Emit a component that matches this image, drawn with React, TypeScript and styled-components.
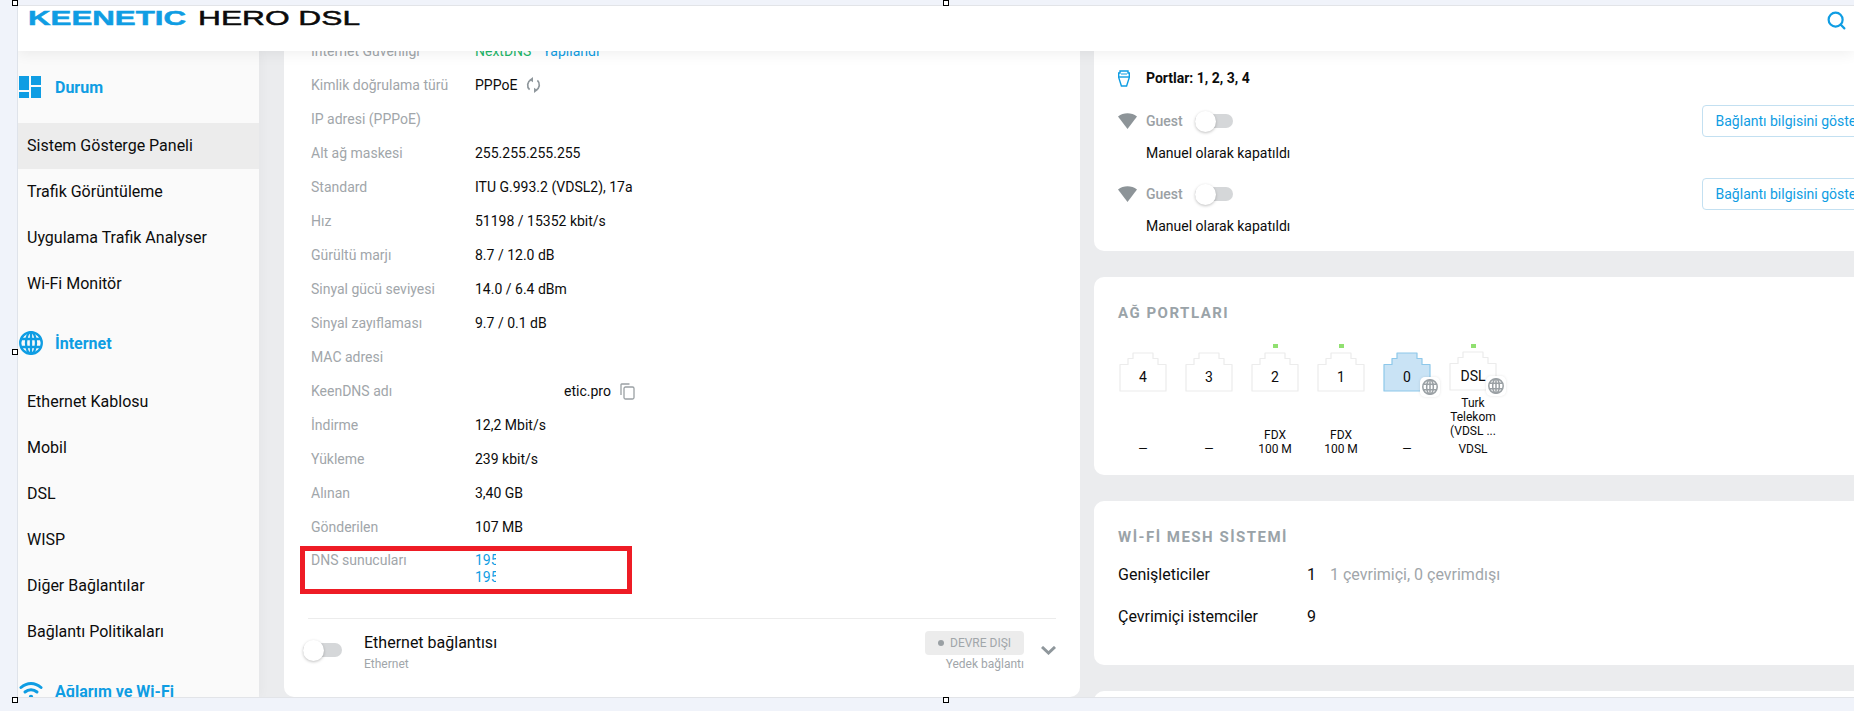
import React from 'react';
import styled, {createGlobalStyle} from "styled-components";
import {Search} from "lucide-react";

const BLUE = '#0f9de3'
const GRAY = '#a1a6aa'

const GlobalStyle = createGlobalStyle`
    html, body {
        margin: 0;
        height: 100%;
        overflow: hidden;
        background: #f0f3fa;
        font-family: Roboto, "Noto Sans", sans-serif;
        color: #0c0c0c;
    }
`

const menu = [
    {icon: 'status', title: 'Durum', items: ['Sistem Gösterge Paneli', 'Trafik Görüntüleme', 'Uygulama Trafik Analyser', 'Wi-Fi Monitör']},
    {icon: 'globe', title: 'İnternet', items: ['Ethernet Kablosu', 'Mobil', 'DSL', 'WISP', 'Diğer Bağlantılar', 'Bağlantı Politikaları']},
    {icon: 'wifi', title: 'Ağlarım ve Wi-Fi', items: []},
]

const details = [
    {label: 'Kimlik doğrulama türü', value: 'PPPoE', extra: 'sync'},
    {label: 'IP adresi (PPPoE)', value: ''},
    {label: 'Alt ağ maskesi', value: '255.255.255.255'},
    {label: 'Standard', value: 'ITU G.993.2 (VDSL2), 17a'},
    {label: 'Hız', value: '51198 / 15352 kbit/s'},
    {label: 'Gürültü marjı', value: '8.7 / 12.0 dB'},
    {label: 'Sinyal gücü seviyesi', value: '14.0 / 6.4 dBm'},
    {label: 'Sinyal zayıflaması', value: '9.7 / 0.1 dB'},
    {label: 'MAC adresi', value: ''},
    {label: 'KeenDNS adı', value: 'etic.pro', extra: 'copy'},
    {label: 'İndirme', value: '12,2 Mbit/s'},
    {label: 'Yükleme', value: '239 kbit/s'},
    {label: 'Alınan', value: '3,40 GB'},
    {label: 'Gönderilen', value: '107 MB'},
]

const ports = [
    {name: '4', speed: ['—']},
    {name: '3', speed: ['—']},
    {name: '2', led: true, speed: ['FDX', '100 M']},
    {name: '1', led: true, speed: ['FDX', '100 M']},
    {name: '0', active: true, globe: true, speed: ['—']},
    {name: 'DSL', led: true, globe: true, raised: true, speed: ['Turk', 'Telekom', '(VDSL ...'], mode: 'VDSL'},
]

const GlobeIcon = ({size = 24, color = BLUE}: {size?: number, color?: string}) => (
    <svg width={size} height={size} viewBox="0 0 24 24" fill="none" stroke={color} strokeWidth="2.3">
        <circle cx="12" cy="12" r="10.8"/>
        <ellipse cx="12" cy="12" rx="5" ry="10.8"/>
        <path d="M12 1V23M2.4 8H21.6M2.4 16H21.6"/>
    </svg>
)

const MenuIcon = ({type}: {type: string}) => {
    if (type === 'status') {
        return (
            <svg width="22" height="22" viewBox="0 0 22 22" fill={BLUE}>
                <rect x="0" y="0" width="10" height="14"/>
                <rect x="12" y="0" width="10" height="9"/>
                <rect x="0" y="16" width="10" height="6"/>
                <rect x="12" y="11" width="10" height="11"/>
            </svg>
        )
    }
    if (type === 'globe') return <GlobeIcon/>
    return (
        <svg width="24" height="22" viewBox="0 0 24 22" fill="none" stroke={BLUE} strokeWidth="3" strokeLinecap="round">
            <path d="M2 7.5C8 2 16 2 22 7.5"/>
            <path d="M6 12C9.5 9 14.5 9 18 12"/>
            <circle cx="12" cy="17" r="2.2" fill={BLUE} stroke="none"/>
        </svg>
    )
}

const SyncIcon = () => (
    <svg width="15" height="16" viewBox="0 0 15 16" fill="none" stroke="#8f979c" strokeWidth="1.7">
        <path d="M5 2.8A6 6 0 0 0 3.6 12.6"/>
        <path d="M10 13.2A6 6 0 0 0 11.4 3.4"/>
        <path d="M7 0V5.2L3.4 2.8Z" fill="#8f979c" stroke="none"/>
        <path d="M8 16V10.8L11.6 13.2Z" fill="#8f979c" stroke="none"/>
    </svg>
)

const CopyIcon = () => (
    <svg width="15" height="17" viewBox="0 0 15 17" fill="none" stroke="#9aa0a4" strokeWidth="1.3">
        <path d="M1 12V1.6C1 1.2 1.2 1 1.6 1H9.5"/>
        <rect x="4" y="4" width="10" height="12" rx="1.5"/>
    </svg>
)

const CableIcon = () => (
    <svg width="12" height="17" viewBox="0 0 12 17" fill="none" stroke={BLUE} strokeWidth="1.4">
        <path d="M2 1H10V3H11.3V7.5L8.6 16H3.4L0.7 7.5V3H2Z"/>
        <path d="M0.7 7H11.3"/>
        <path d="M4 3V5M6 3V5M8 3V5" strokeWidth="1"/>
    </svg>
)

const GuestIcon = () => (
    <svg width="19" height="16" viewBox="0 0 19 16" fill="#8d9498">
        <path d="M0 3.6C5.5 -0.8 13.5 -0.8 19 3.6L9.5 16Z"/>
    </svg>
)

const PortShape = ({active}: {active?: boolean}) => (
    <svg width="48" height="40" viewBox="0 0 48 40"
         fill={active ? '#c9e3f5' : '#fff'} stroke={active ? '#8ec8ea' : '#ececec'} strokeWidth="1.2">
        <path d="M1 12.5H9V6.5H14V1H34V6.5H39V12.5H47V39H1Z" strokeLinejoin="round"/>
    </svg>
)

const Toggle = () => (
    <ToggleTrack>
        <ToggleKnob/>
    </ToggleTrack>
)

const GuestNetwork = () => (
    <GuestBlock>
        <GuestRow>
            <IconCell><GuestIcon/></IconCell>
            <GuestName>Guest</GuestName>
            <Toggle/>
            <OutlineButton>Bağlantı bilgisini göster</OutlineButton>
        </GuestRow>
        <GuestNote>Manuel olarak kapatıldı</GuestNote>
    </GuestBlock>
)

export default function App() {
    return (
        <>
            <GlobalStyle/>
            <Frame>
                <Header>
                    <svg width="345" height="24" viewBox="0 0 345 24">
                        <text x="0" y="18.5" fontFamily="Liberation Sans" fontWeight="700" fontSize="21"
                              fill={BLUE} stroke={BLUE} strokeWidth="0.5" textLength="158" lengthAdjust="spacingAndGlyphs">KEENETIC</text>
                        <text x="170" y="18.5" fontFamily="Liberation Sans" fontSize="21"
                              fill="#0b0b0b" stroke="#0b0b0b" strokeWidth="0.5" textLength="162" lengthAdjust="spacingAndGlyphs">HERO DSL</text>
                    </svg>
                    <SearchButton><Search size={21} color={BLUE} strokeWidth={2.5}/></SearchButton>
                </Header>
                <Main>
                    <Sidebar>
                        {menu.map(group => (
                            <div key={group.title}>
                                <GroupHead>
                                    <GroupIcon><MenuIcon type={group.icon}/></GroupIcon>
                                    {group.title}
                                </GroupHead>
                                {group.items.map((item, i) => (
                                    <MenuItem key={item} $active={group.icon === 'status' && i === 0}>{item}</MenuItem>
                                ))}
                            </div>
                        ))}
                    </Sidebar>
                    <Content>
                        <LeftCard>
                            <DetailRow>
                                <DetailLabel>İnternet Güvenliği</DetailLabel>
                                <DetailValue>
                                    <GreenText>NextDNS</GreenText>
                                    <BlueText>Yapılandı</BlueText>
                                </DetailValue>
                            </DetailRow>
                            {details.map(e => (
                                <DetailRow key={e.label}>
                                    <DetailLabel>{e.label}</DetailLabel>
                                    <DetailValue $hiddenPart={e.extra === 'copy'}>
                                        {e.value}
                                        {e.extra === 'sync' && <SyncIcon/>}
                                        {e.extra === 'copy' && <CopyIcon/>}
                                    </DetailValue>
                                </DetailRow>
                            ))}
                            <DnsRow>
                                <DetailLabel>DNS sunucuları</DetailLabel>
                                <DnsList>
                                    <span>195</span>
                                    <span>195</span>
                                </DnsList>
                                <RedMark/>
                            </DnsRow>
                            <Divider/>
                            <Connection>
                                <Toggle/>
                                <ConnectionText>
                                    <ConnectionTitle>Ethernet bağlantısı</ConnectionTitle>
                                    <ConnectionSub>Ethernet</ConnectionSub>
                                </ConnectionText>
                                <ConnectionStatus>
                                    <StatusBadge><StatusDot/>DEVRE DIŞI</StatusBadge>
                                    <ConnectionSub>Yedek bağlantı</ConnectionSub>
                                </ConnectionStatus>
                                <Chevron width="15" height="9" viewBox="0 0 15 9" fill="none" stroke="#8f979c" strokeWidth="3">
                                    <path d="M1 1L7.5 7L14 1"/>
                                </Chevron>
                            </Connection>
                        </LeftCard>
                        <RightColumn>
                            <WifiCard>
                                <PortsLine>
                                    <IconCell><CableIcon/></IconCell>
                                    <strong>Portlar: 1, 2, 3, 4</strong>
                                </PortsLine>
                                <GuestNetwork/>
                                <GuestNetwork/>
                            </WifiCard>
                            <PortsCard>
                                <CardTitle>AĞ PORTLARI</CardTitle>
                                <PortList>
                                    {ports.map(p => (
                                        <PortColumn key={p.name}>
                                            <PortLed $on={!!p.led}/>
                                            <PortBody $raised={!!p.raised}>
                                                <PortShape active={p.active}/>
                                                <PortName>{p.name}</PortName>
                                                {p.globe && <PortBadge><GlobeIcon size={16} color="#9aa0a4"/></PortBadge>}
                                            </PortBody>
                                            <PortInfo $raised={!!p.raised}>
                                                {p.speed.map((line, i) => <div key={i}>{line}</div>)}
                                                {p.mode && <PortMode>{p.mode}</PortMode>}
                                            </PortInfo>
                                        </PortColumn>
                                    ))}
                                </PortList>
                            </PortsCard>
                            <MeshCard>
                                <CardTitle>Wİ-Fİ MESH SİSTEMİ</CardTitle>
                                <MeshRow>
                                    <MeshLabel>Genişleticiler</MeshLabel>
                                    <span>1</span>
                                    <MeshNote>1 çevrimiçi, 0 çevrimdışı</MeshNote>
                                </MeshRow>
                                <MeshRow>
                                    <MeshLabel>Çevrimiçi istemciler</MeshLabel>
                                    <span>9</span>
                                </MeshRow>
                            </MeshCard>
                            <EmptyCard/>
                        </RightColumn>
                    </Content>
                </Main>
            </Frame>
            <Handle $x={12} $y={0}/>
            <Handle $x={943} $y={0}/>
            <Handle $x={12} $y={349}/>
            <Handle $x={12} $y={697}/>
            <Handle $x={943} $y={697}/>
        </>
    );
}

const Frame = styled.div`
    box-sizing: border-box;
    margin: 5px 0 0 17px;
    width: 1837px;
    height: 693px;
    display: flex;
    flex-direction: column;
    overflow: hidden;
    border-top: 1px solid #e2e4e8;
    border-bottom: 1px solid #e2e4e8;
    border-left: 1px solid #dfe3ea;
    background: #ebecee;
`
const Header = styled.header`
    flex: 0 0 45px;
    position: relative;
    z-index: 2;
    display: flex;
    justify-content: space-between;
    padding: 0 7px 0 10px;
    background: #fff;
    box-shadow: 0 2px 14px rgba(0, 0, 0, .07);
`
const SearchButton = styled.div`
    padding-top: 4px;
`
const Main = styled.div`
    flex: 1;
    display: flex;
    min-height: 0;
`
const Sidebar = styled.nav`
    flex: 0 0 241px;
    background: #fafafa;
    overflow: hidden;
    box-shadow: 2px 0 10px rgba(0, 0, 0, .03);
`
const GroupHead = styled.div`
    height: 72px;
    display: flex;
    align-items: center;
    color: ${BLUE};
    font-size: 16px;
    font-weight: 700;
`
const GroupIcon = styled.span`
    flex: 0 0 37px;
    display: flex;
    padding-left: 1px;
    box-sizing: border-box;
`
const MenuItem = styled.div<{$active?: boolean}>`
    height: 46px;
    line-height: 46px;
    padding-left: 9px;
    font-size: 16px;
    background: ${props => props.$active ? '#ececec' : 'transparent'};
`
const Content = styled.div`
    flex: 1;
    display: flex;
    align-items: flex-start;
    gap: 14px;
    padding-left: 25px;
    min-width: 0;
`
const LeftCard = styled.section`
    flex: 0 0 796px;
    box-sizing: border-box;
    height: 663px;
    margin-top: -17px;
    background: #fff;
    border-radius: 10px;
`
const DetailRow = styled.div`
    display: flex;
    height: 34px;
    align-items: center;
    padding-left: 27px;
    font-size: 14px;
`
const DetailLabel = styled.div`
    flex: 0 0 164px;
    color: ${GRAY};
`
const DetailValue = styled.div<{$hiddenPart?: boolean}>`
    display: flex;
    align-items: center;
    gap: 9px;
    padding-left: ${props => props.$hiddenPart ? '89px' : '0'};
    color: #0c0c0c;
`
const GreenText = styled.span`
    color: #1fb76a;
    margin-right: 2px;
`
const BlueText = styled.span`
    color: ${BLUE};
`
const DnsRow = styled.div`
    position: relative;
    display: flex;
    box-sizing: border-box;
    height: 50px;
    padding: 8px 0 0 27px;
    font-size: 14px;
    line-height: 17px;
`
const DnsList = styled.div`
    display: flex;
    flex-direction: column;
    width: 21px;
    overflow: hidden;
    color: ${BLUE};
`
const RedMark = styled.div`
    position: absolute;
    left: 16px;
    top: 2px;
    box-sizing: border-box;
    width: 332px;
    height: 48px;
    border: 5px solid #ee1c25;
`
const Divider = styled.div`
    height: 1px;
    margin: 24px 24px 0 24px;
    background: #ececec;
`
const Connection = styled.div`
    display: flex;
    align-items: flex-start;
    padding: 0 24px 0 19px;
`
const ToggleTrack = styled.div`
    position: relative;
    flex: 0 0 38px;
    height: 14px;
    margin-top: 0;
    border-radius: 7px;
    background: #d5d7d9;
    ${Connection} > & {
        flex-basis: 39px;
        margin-top: 24px;
    }
`
const ToggleKnob = styled.div`
    position: absolute;
    left: 0;
    top: -3.5px;
    width: 21px;
    height: 21px;
    border-radius: 50%;
    background: #fff;
    box-shadow: 0 1px 3px rgba(0, 0, 0, .25);
`
const ConnectionText = styled.div`
    flex: 1;
    margin-left: 22px;
    padding-top: 14px;
`
const ConnectionTitle = styled.div`
    font-size: 16px;
    line-height: 20px;
    margin-bottom: 3px;
`
const ConnectionSub = styled.div`
    font-size: 12px;
    line-height: 16px;
    color: ${GRAY};
`
const ConnectionStatus = styled.div`
    display: flex;
    flex-direction: column;
    align-items: flex-end;
    gap: 1px;
    padding-top: 12px;
`
const StatusBadge = styled.div`
    display: flex;
    align-items: center;
    gap: 6px;
    box-sizing: border-box;
    width: 99px;
    height: 24px;
    padding-left: 13px;
    border-radius: 4px;
    background: #ececec;
    color: ${GRAY};
    font-size: 12px;
`
const StatusDot = styled.span`
    width: 6px;
    height: 6px;
    border-radius: 50%;
    background: #9aa0a4;
`
const Chevron = styled.svg`
    margin: 27px 0 0 17px;
`
const RightColumn = styled.div`
    flex: 0 0 805px;
    display: flex;
    flex-direction: column;
    gap: 26px;
`
const Card = styled.section`
    box-sizing: border-box;
    padding: 0 24px;
    background: #fff;
    border-radius: 10px;
`
const WifiCard = styled(Card)`
    margin-top: -20px;
    padding-top: 30px;
    padding-bottom: 16px;
`
const PortsLine = styled.div`
    display: flex;
    align-items: center;
    height: 34px;
    margin-bottom: 10px;
    font-size: 14px;
    strong {
        font-weight: 700;
    }
`
const IconCell = styled.span`
    flex: 0 0 28px;
    display: flex;
`
const GuestBlock = styled.div`
    & + & {
        margin-top: 16px;
    }
`
const GuestRow = styled.div`
    display: flex;
    align-items: center;
    height: 32px;
`
const GuestName = styled.span`
    flex: 0 0 49px;
    color: #9aa0a4;
    font-size: 14px;
    font-weight: 500;
`
const OutlineButton = styled.button`
    box-sizing: border-box;
    height: 32px;
    margin-left: auto;
    padding: 0 13px;
    border: 1px solid #c3e0f1;
    border-radius: 4px;
    background: #fff;
    color: ${BLUE};
    font-family: inherit;
    font-size: 14px;
    white-space: nowrap;
`
const GuestNote = styled.div`
    margin: 7px 0 0 28px;
    font-size: 14px;
    line-height: 18px;
`
const PortsCard = styled(Card)`
    height: 198px;
    padding-top: 27px;
`
const CardTitle = styled.h3`
    margin: 0;
    color: #9aa3a8;
    font-size: 15px;
    font-weight: 700;
    line-height: 18px;
    letter-spacing: 1.5px;
`
const PortList = styled.div`
    display: flex;
    margin: 22px 0 0 -8px;
`
const PortColumn = styled.div`
    width: 66px;
    display: flex;
    flex-direction: column;
    align-items: center;
    font-size: 12px;
    line-height: 14px;
    text-align: center;
`
const PortLed = styled.div<{$on: boolean}>`
    width: 5px;
    height: 4px;
    margin-bottom: 4px;
    background: ${props => props.$on ? '#90e070' : 'transparent'};
`
const PortBody = styled.div<{$raised: boolean}>`
    position: relative;
    width: 48px;
    height: 40px;
    margin-top: ${props => props.$raised ? '-1px' : '0'};
    svg {
        display: block;
    }
`
const PortName = styled.span`
    position: absolute;
    left: 0;
    right: 0;
    top: 16px;
    font-size: 14px;
    line-height: 18px;
`
const PortBadge = styled.span`
    position: absolute;
    right: -9px;
    bottom: -5px;
    width: 20px;
    height: 20px;
    display: flex;
    align-items: center;
    justify-content: center;
    border-radius: 5px;
    background: #fff;
    box-shadow: 0 0 3px rgba(0, 0, 0, .1);
`
const PortInfo = styled.div<{$raised: boolean}>`
    box-sizing: border-box;
    height: 60px;
    margin-top: ${props => props.$raised ? '5px' : '4px'};
    display: flex;
    flex-direction: column;
    justify-content: flex-end;
`
const PortMode = styled.div`
    margin-top: 4px;
`
const MeshCard = styled(Card)`
    height: 164px;
    padding-top: 27px;
`
const MeshRow = styled.div`
    display: flex;
    align-items: center;
    height: 42px;
    font-size: 16px;
    &:first-of-type {
        margin-top: 7px;
    }
`
const MeshLabel = styled.span`
    flex: 0 0 189px;
`
const MeshNote = styled.span`
    margin-left: 14px;
    color: ${GRAY};
`
const EmptyCard = styled(Card)`
    height: 100px;
`
const Handle = styled.div<{$x: number, $y: number}>`
    position: absolute;
    left: ${props => props.$x}px;
    top: ${props => props.$y}px;
    box-sizing: border-box;
    width: 6px;
    height: 6px;
    border: 1px solid #000;
    background: #fff;
`
